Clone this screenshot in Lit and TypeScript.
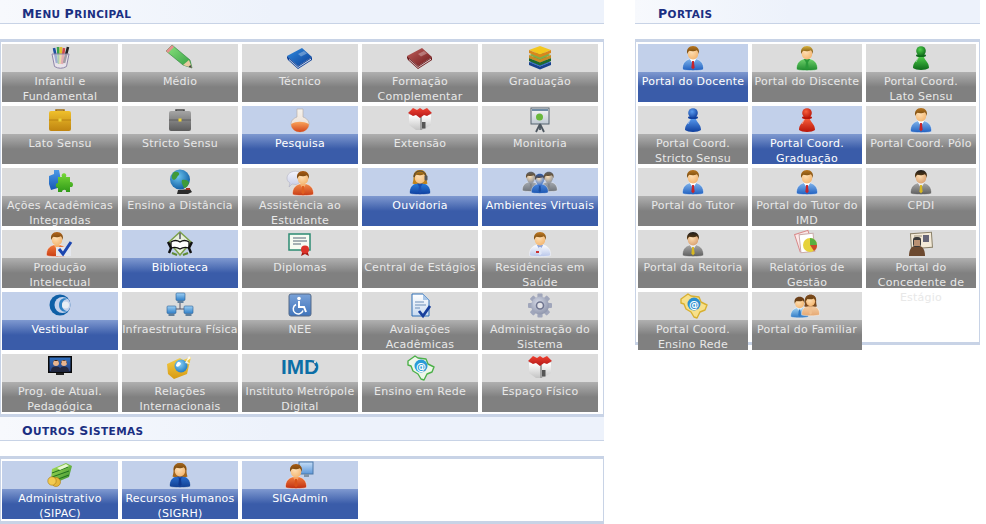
import { LitElement, html, css, svg } from "lit";
import { customElement } from "lit/decorators.js";

const defs = new Map<string, any>();
const L = (a: string, b: string, diag = false) => {
  const id = `l${diag ? "d" : ""}${a.slice(1)}${b.slice(1)}`;
  if (!defs.has(id))
    defs.set(id, svg`<linearGradient id=${id} x1="0" y1="0" x2=${diag ? "1" : "0"} y2="1"><stop offset="0" stop-color=${a}/><stop offset="1" stop-color=${b}/></linearGradient>`);
  return `url(#${id})`;
};
const R = (a: string, b: string) => {
  const id = `r${a.slice(1)}${b.slice(1)}`;
  if (!defs.has(id))
    defs.set(id, svg`<radialGradient id=${id} cx=".4" cy=".35" r=".7"><stop offset="0" stop-color=${a}/><stop offset="1" stop-color=${b}/></radialGradient>`);
  return `url(#${id})`;
};

type P = { skin?: string; hair?: string; a?: string; b?: string; tie?: string; shirt?: string; x?: number; y?: number; s?: number; long?: boolean };
const person = ({ skin = "#f3b56f", hair = "#b8761f", a = "#7fb3ea", b = "#1f5fc0", tie = "#c8242a", shirt = "#fff", x = 0, y = 0, s = 1, long = false }: P) => svg`
  <g transform="translate(${x} ${y}) scale(${s})">
    <path d="M5.500 24.500c-.5-6 3-9.500 7-10.500h7c4 1 7.500 4.500 7 10.500-3 1.500-18 1.500-21 0z" fill=${L(a, b)} stroke="#fff" stroke-opacity=".55" stroke-width=".8"/>
    <path d="M12.800 14l3.200 5 3.200-5z" fill=${shirt}/>
    <path d="M15.100 16h1.800l.7 6.500-1.600 2-1.600-2z" fill=${tie}/>
    ${long ? svg`<path d="M9.500 9c-1-5 2.500-8 6.500-8s7.500 3 6.500 8c0 2 .5 4 1 5.500-2 1-4 .5-5 0h-5c-1 .5-3 1-5 0 .5-1.500 1-3.500 1-5.500z" fill=${hair}/>` : ""}
    <ellipse cx="16" cy="8.500" rx="5.300" ry="6" fill=${R("#ffe0b5", skin)}/>
    <path d="M10.300 9C9 4 12 1 16 1s7 3 5.700 8c-.4-2-1.200-3.200-2-3.700-2 1.200-5.500 1.200-7.200.5-1 .7-1.800 1.700-2.200 3.200z" fill=${L(hair, "#6b430f")}/>
  </g>`;

const pawn = (a: string, b: string) => svg`
  <path d="M8 23c0-6 4-7 5.500-12h5C20 16 24 17 24 23c-3 2.500-13 2.500-16 0z" fill=${L(a, b)}/>
  <ellipse cx="16" cy="10.500" rx="5" ry="1.500" fill=${b}/>
  <circle cx="16" cy="6" r="4.800" fill=${R(a, b)}/>
  <path d="M11 17c1-2 2-4 2.500-5" stroke="#fff" stroke-opacity=".5" stroke-width="1" fill="none"/>`;

const book = (a: string, b: string, page = "#ddd") => svg`
  <path d="M3 11L18 3l10 9-14 9z" fill=${L(a, b, true)}/>
  <path d="M3 11l11 10 14-9v3l-14 9L4 15q-1.500-2-1-4z" fill=${b}/>
  <path d="M5 14l9 8 13-8.500v1.200L14 23l-9-8z" fill=${page}/>
  <path d="M14 9l6-3 3 2.500-6 3z" fill="#fff" fill-opacity=".3"/>`;

const slab = (y: number, a: string, b: string) => svg`
  <path d="M5 ${y + 4}L16 ${y}l11 4-11 4.500z" fill=${a}/>
  <path d="M5 ${y + 4}l11 4.500 11-4.500v3l-11 4.500-11-4.500z" fill=${b}/>`;
const stack = svg`${slab(13, "#2f6fd0", "#17418f")}${slab(9, "#3ea24a", "#1f6b2c")}${slab(6, "#7bb04b", "#c98a25")}${slab(1, "#f3c71e", "#d8871c")}`;

const brief = (a: string, b: string, d: string) => svg`
  <path d="M12 6V3h8v3" fill="none" stroke=${d} stroke-width="1.500"/>
  <rect x="5" y="4" width="22" height="20" rx="2" fill=${L(a, b)}/>
  <path d="M5 13h22" stroke=${d} stroke-opacity=".6"/>
  <rect x="14.500" y="11.500" width="3" height="3" fill="#ecd33a"/>`;

const house = svg`
  <path d="M5 8h22v10l-9 5h-6l-7-5z" fill=${L("#ffffff", "#c4c4c4")}/>
  <path d="M16 10v13h2V10z" fill="#a2a2a2"/>
  <rect x="18" y="15" width="3.500" height="6.500" fill="#555"/>
  <path d="M4 6l5-5 4 2 3-2 3 2 4-2 5 5-5 3-3-1-4 3-4-3-3 1z" fill=${L("#f04030", "#b01818")}/>`;

const board = svg`
  <rect x="7" y="1" width="18" height="16" fill=${L("#f7f7f7", "#bfc9d2")} stroke="#55636e"/>
  <circle cx="15.500" cy="10" r="3.500" fill="#69b83c"/>
  <path d="M8 3h16" stroke="#6f8ca5" stroke-width="2"/>
  <path d="M16 17l-4 8M16 17l4 8M16 17v6" stroke="#4d5760" stroke-width="1.800"/>`;

const puzzle = svg`
  <path d="M5 7l5-2V1h5l1 5 1 12-10 3-2-6z" fill=${L("#4c9ae8", "#1658b5")}/>
  <path d="M14 8h4c-2-5 6-5 4 0h4v5c4-1 4 6 0 5v5h-4c1-3-4-3-4 0h-4v-4c-3 0-3-5 0-5z" fill=${L("#78d838", "#2f9a18")}/>`;

const globe = svg`
  <path d="M14 21l12-1 2 3-4 2H13z" fill="#2c2c2c"/><rect x="22" y="19" width="4" height="2" fill="#a03020"/>
  <circle cx="16" cy="10.500" r="10" fill=${R("#6cc5f0", "#0d5aa0")}/>
  <path d="M10 3c4-1 6 1 5 3-2 1-2 4-5 5-3-1-3-5 0-8zM18 11c4-1 7 1 7 3-1 3-3 5-5 5-1-3-3-5-2-8z" fill="#3f9a3a"/>`;

const bubbleP = svg`
  <path d="M3 9c0-6 8-8 12-6 2 2 2 8-1 12-2 1-5 0-6 0l-3 3 1-4c-2-1-3-3-3-5z" fill=${L("#f4f4fb", "#c5cbe6")} stroke="#aab" stroke-width=".5"/>
  ${person({ hair: "#a85a12", a: "#f08a4a", b: "#c93c14", tie: "#e06020", shirt: "#f6b070", x: 3, y: 1 })}`;

const headset = svg`
  ${person({ hair: "#c0841e", a: "#2a80dd", b: "#103f9e", tie: "#1a4fb0", shirt: "#1a4fb0", skin: "#f4be7a", long: true })}
  <path d="M10 8c0-8 12-8 12 0" fill="none" stroke="#444" stroke-width="1"/>
  <rect x="20.500" y="6.500" width="3" height="5" rx="1" fill="#555"/>`;

const group = svg`
  ${person({ hair: "#5f646c", a: "#a4a9b0", b: "#6f747b", tie: "#80858c", shirt: "#90959c", skin: "#8f949c", x: -6, y: 2, s: .8 })}
  ${person({ hair: "#5f646c", a: "#a4a9b0", b: "#6f747b", tie: "#80858c", shirt: "#90959c", skin: "#8f949c", x: 12, y: 2, s: .8 })}
  ${person({ hair: "#2b5bb0", a: "#4a86dc", b: "#1c56b0", tie: "#1c4ea0", shirt: "#3a70c8", skin: "#4a7ccc", x: 3, y: 4, s: .8 })}`;

const check = svg`
  ${person({ hair: "#b5661c", a: "#f07a3a", b: "#c93c14", tie: "#e06020", shirt: "#f6b070", x: -3 })}
  <path d="M12 25v-9h15v9z" fill="#e4e7ee"/>
  <path d="M15 18l4 5 8-12" fill="none" stroke="#1c46b0" stroke-width="3"/>`;

const library = svg`
  <path d="M16 1l11 10-11 13L5 11z" fill="#e7efdc" stroke="#7ca04a" stroke-width="1.500"/>
  <path d="M7 11c3-2 6-2 9 0 3-2 6-2 9 0v6c-3-1-6-1-9 1-3-2-6-2-9-1z" fill="#fff" stroke="#111" stroke-width="1.300"/>
  <path d="M4 11l3 6-2 5M28 11l-3 6 2 5" stroke="#111" stroke-width="2.400" fill="none"/>
  <path d="M16 2v6" stroke="#556" stroke-width="1.500"/><path d="M8 22l5 2M24 22l-5 2" stroke="#5f8a35" stroke-width="2"/>`;

const diploma = svg`
  <rect x="5" y="3" width="21" height="16" fill="#f7fbf2" stroke="#2c8b72" stroke-width="1.500"/>
  <path d="M9 7h13M9 10h14M9 13h8" stroke="#567" stroke-width="1"/>
  <path d="M17 25l2-6h4l2 6-4-2z" fill="#a01a14"/><circle cx="21" cy="18.500" r="4" fill="#dc3228"/>`;

const doctor = svg`
  ${person({ hair: "#c07a22", a: "#fbfcff", b: "#b8c6ea", tie: "#dfe6f6", shirt: "#8ea6dd" })}
  <rect x="12" y="20" width="3" height="2" fill="#c33"/>`;

const swirlBlue = svg`
  <circle cx="16" cy="12" r="10.500" fill="#0e5fa6"/>
  <circle cx="18.500" cy="12" r="8" fill="#c2d0ea"/>
  <path d="M24 6c-5-2-9 1-9 6s4 8 9 6c-3 0-6-2-6-6s3-6 6-6z" fill="#2f82c4"/>
  <circle cx="21.500" cy="12" r="3.500" fill="#e8eef4"/>`;

const pc = (x: number, y: number) => svg`
  <rect x=${x} y=${y} width="9" height="7.500" rx="1" fill=${L("#9fd0f4", "#2f7fc8")} stroke="#2a5f96" stroke-width=".6"/>
  <rect x=${x + 1.5} y=${y + 8} width="6" height="2" fill="#5f7f9c"/>`;
const network = svg`
  <path d="M16 8v8H8v2M16 16h9v2" fill="none" stroke="#556" stroke-width="1"/>
  ${pc(12, 0)}${pc(3, 13)}${pc(20, 13)}`;

const wheel = svg`
  <rect x="5" y="1" width="22" height="22" rx="2" fill=${L("#7aa2d8", "#3f74bb")} stroke="#566b88"/>
  <circle cx="15" cy="5.500" r="1.800" fill="#fff"/>
  <path d="M15 8v6h5l2 5" fill="none" stroke="#fff" stroke-width="2"/>
  <path d="M12 11.500a5 5 0 1 0 7 6" fill="none" stroke="#fff" stroke-width="1.500"/>`;

const doc = svg`
  <path d="M8 1h11l6 6v16H8z" fill=${L("#fff", "#c8daf0")} stroke="#2f6fb5"/>
  <path d="M19 1v6h6z" fill="#a8c6e8"/>
  <path d="M11 9h9M11 12h11M11 15h5" stroke="#6d8fb8"/>
  <path d="M15 18l4 5 7-10" fill="none" stroke="#173f9c" stroke-width="2.800"/>`;

const gear = svg`
  <g transform="translate(16 12.500)">
    ${[0, 45, 90, 135].map((r) => svg`<rect x="-2.600" y="-12" width="5.200" height="24" rx="1" transform="rotate(${r})" fill="#a0a6bb"/>`)}
    <circle r="9" fill=${R("#d5d9e6", "#8c93aa")}/><circle r="3.500" fill="#e4e4e8" stroke="#6f7590" stroke-width="1.600"/>
  </g>`;

const tv = svg`
  <rect x="4" y="1" width="24" height="17" fill="#0a0a0a"/>
  <rect x="5.500" y="2.500" width="21" height="14" fill=${L("#2f6fc0", "#2a3f7a")}/>
  <circle cx="12" cy="8" r="3" fill="#e8b58e"/><circle cx="20" cy="8" r="3" fill="#e8b58e"/>
  <path d="M7 16.500c0-4 2-5 5-5s5 1 4 5zM15.500 16.500c0-4 2-5 4.500-5s5 1 5 5z" fill="#23283f"/>
  <path d="M9 8c0-4 6-4 6 0l-1-2h-4zM17 9c-1-5 7-5 6 0l-1-3h-4z" fill="#2b1a10"/>
  <path d="M12 18h8v2H12z" fill="#222"/>`;

const folderGlobe = svg`
  <path d="M3 9l13-6 3 2 8-3-4 17-13 5-6-5z" fill=${L("#f6d04a", "#d79a12")}/>
  <circle cx="17" cy="11" r="6.500" fill=${R("#8ed4f6", "#1c78c0")}/>
  <path d="M14 7c3 0 4 2 2 3-1 2-3 2-4 1 0-2 1-3 2-4z" fill="#fff"/>
  <path d="M25 1l2 2-4 3 3 3-5-1z" fill="#fff" fill-opacity=".85"/>`;

const imd = svg`
  <text x="16" y="19" text-anchor="middle" font-family="Liberation Sans, sans-serif" font-weight="700" font-size="21" textLength="38" lengthAdjust="spacingAndGlyphs" fill="#0c6ea6">IMD</text>
  <circle cx="31" cy="7" r="1.200" fill="#ddd"/><circle cx="28" cy="10" r="1.200" fill="#ddd"/><circle cx="31" cy="12" r="1" fill="#ddd"/>`;

const brazil = (fill: string, line: string, at: string) => svg`
  <path d="M4 6l7-5 3 2 8 1 2 5 6 3-2 5-5 2-3 6-3-1-3-5-5-3-2-5-3-1z" fill=${fill} stroke=${line} stroke-width="1.400" stroke-linejoin="round"/>
  <circle cx="17" cy="11" r="6.500" fill=${at}/>
  <text x="17" y="14.500" text-anchor="middle" font-family="DejaVu Sans, sans-serif" font-weight="700" font-size="10" fill="#fff">@</text>`;

const money = svg`
  <path d="M8 7l14-6 6 3-3 11-14 6-4-4z" fill=${L("#b0e65a", "#2e8a2c", true)}/>
  <path d="M8 11l16-6M8 15l17-6M9 19l16-6" stroke="#1f6f1f" stroke-width="1"/>
  <path d="M13 6l9-4 3 2-9 4z" fill="#e6f6d0"/>
  <circle cx="12" cy="20" r="4.500" fill="#e6b73a" stroke="#a87a14" stroke-width=".6"/>
  <circle cx="8" cy="19" r="4.200" fill="#f3cb50" stroke="#a87a14" stroke-width=".6"/>`;

const woman = person({ hair: "#a4661c", a: "#2a6fd0", b: "#123f90", tie: "#103a90", shirt: "#1a4fb0", long: true });

const sigadmin = svg`
  <rect x="15" y="0" width="14" height="12" fill=${L("#c6def7", "#5d97d8")} stroke="#4d79a8"/>
  <path d="M20 12h5v3h-5z" fill="#7f93a8"/>
  ${person({ hair: "#a85a12", a: "#f07a3a", b: "#c02f10", tie: "#d85018", shirt: "#f6a060", x: -4, y: 1 })}`;

const report = svg`
  <rect x="6" y="1" width="14" height="18" transform="rotate(-18 13 10)" fill="#fbe8e8" stroke="#d88a8a"/>
  <rect x="9" y="3" width="14" height="18" transform="rotate(-6 16 12)" fill="#fff" stroke="#c9a9a9"/>
  <circle cx="19" cy="14" r="7" fill="#e6d23c"/>
  <path d="M19 14V7a7 7 0 0 1 7 7z" fill="#58b040"/><path d="M19 14h7a7 7 0 0 1-3 6z" fill="#c94a2a"/>`;

const concedente = svg`
  <rect x="6" y="2" width="21" height="15" fill="#f3ead8" stroke="#8a8068" transform="rotate(-4 16 10)"/>
  <rect x="18" y="4" width="6" height="7" fill="#667" />
  <path d="M9 5h8M9 8h7" stroke="#9a8f78"/>
  <path d="M4 25c0-6 2-9 5-10h6c3 1 5 4 5 10z" fill="#6d4a30"/>
  <rect x="8" y="6" width="8" height="10" rx="3" fill="#3a3a3a"/>
  <rect x="9" y="9" width="6" height="6" fill="#b99072"/>`;

const family = svg`
  ${person({ hair: "#6b3d1a", a: "#9dd0f2", b: "#2f79c4", tie: "#2f79c4", shirt: "#dbeefa", x: -5, y: 3, s: .85 })}
  ${person({ hair: "#7c4a1e", a: "#f5cfa5", b: "#e5a873", tie: "#f0c090", shirt: "#f0c090", x: 6, y: 1, s: .85, long: true })}`;

const teacher = person({});
const green = person({ hair: "#d9b23a", a: "#6ed06a", b: "#1e8a2e", tie: "#2a9a3a", shirt: "#2a9a3a" });
const dark = person({ hair: "#1d1d1d", a: "#a8a8a8", b: "#5e5e5e", tie: "#d8b820", shirt: "#eee", skin: "#d9a070" });

const cup = svg`
  <g fill="none" stroke-width="2.600">
    <path d="M10 3l3 15" stroke="#1d4fa0"/><path d="M14 2l1 17" stroke="#3aa14a"/><path d="M17 2l-.5 17" stroke="#e0c030"/>
    <path d="M20 3l-2 16" stroke="#cf4a4a"/><path d="M24 2l-4 16" stroke="#222"/>
  </g>
  <path d="M8 9h17l-2.500 12.500Q16.500 25 10.500 21.500z" fill="#f0e8f4" fill-opacity=".62" stroke="#8f86a8"/>`;

const pencil = svg`
  <path d="M8 0l18 15 2 8-9-3L2 6z" fill=${L("#8fe680", "#2f9a40", true)} stroke="#2a7f38" stroke-width=".6"/>
  <path d="M8 0L2 6l2 2 6-6z" fill="#e88f8f"/>
  <path d="M25 15l3 8-9-3z" fill="#e9c9a0"/><path d="M26.500 20l1.500 3-3.500-1.300z" fill="#444"/>`;

const flask = svg`
  <path d="M13 2h6v8c4 1.500 6 4 6 7a9 8 0 0 1-18 0c0-3 2-5.500 6-7z" fill=${L("#f6f3ee", "#e8d8cc")} stroke="#b5a9a0" stroke-width=".6"/>
  <path d="M7.200 17c5-3 12-3 17.600 0 .2 4.500-4 8-8.800 8s-9-3.500-8.800-8z" fill=${L("#f9a45a", "#d4461a")}/>`;

const none = svg``;

type Item = [string, any, boolean?];
const menu: Item[] = [
  ["Infantil e Fundamental", cup], ["Médio", pencil], ["Técnico", book("#2f8be0", "#0d3f96", "#cfd8e8")],
  ["Formação Complementar", book("#c0605c", "#6e1a1c", "#d8c8c8")], ["Graduação", stack],
  ["Lato Sensu", brief("#efc02c", "#bf8410", "#a06c0c")], ["Stricto Sensu", brief("#a5a5a5", "#5c5c5c", "#444")],
  ["Pesquisa", flask, true], ["Extensão", house], ["Monitoria", board],
  ["Ações Acadêmicas Integradas", puzzle], ["Ensino a Distância", globe], ["Assistência ao Estudante", bubbleP],
  ["Ouvidoria", headset, true], ["Ambientes Virtuais", group, true],
  ["Produção Intelectual", check], ["Biblioteca", library, true], ["Diplomas", diploma], ["Central de Estágios", none],
  ["Residências em Saúde", doctor],
  ["Vestibular", swirlBlue, true], ["Infraestrutura Física", network], ["NEE", wheel], ["Avaliações Acadêmicas", doc],
  ["Administração do Sistema", gear],
  ["Prog. de Atual. Pedagógica", tv], ["Relações Internacionais", folderGlobe], ["Instituto Metrópole Digital", imd],
  ["Ensino em Rede", brazil("#eef6ea", "#4db04a", "#2a9bd8")], ["Espaço Físico", house],
];
const outros: Item[] = [
  ["Administrativo (SIPAC)", money, true], ["Recursos Humanos (SIGRH)", woman, true], ["SIGAdmin", sigadmin, true],
];
const portais: Item[] = [
  ["Portal do Docente", teacher, true], ["Portal do Discente", green], ["Portal Coord.\nLato Sensu", pawn("#4fd04a", "#0e6a1a")],
  ["Portal Coord. Stricto Sensu", pawn("#5a9cf0", "#0f3f9e")], ["Portal Coord. Graduação", pawn("#f8603c", "#b81408"), true], ["Portal Coord. Pólo", teacher],
  ["Portal do Tutor", teacher], ["Portal do Tutor do IMD", teacher], ["CPDI", dark],
  ["Portal da Reitoria", dark], ["Relatórios de Gestão", report], ["Portal do Concedente de Estágio", concedente],
  ["Portal Coord. Ensino Rede", brazil("#f7e08a", "#d8b030", "#2a8fd0")], ["Portal do Familiar", family],
];

const heading = (t: string) =>
  html`<h2>${t.split(" ").map((w, i) => html`${i ? " " : ""}<span class="cap">${w[0]}</span>${w.slice(1)}`)}</h2>`;

@customElement("app-root")
export class AppRoot extends LitElement {
  static styles = css`
    :host { display: block; width: 986px; height: 524px; overflow: hidden; background: #fff; font-family: "DejaVu Sans", Verdana, sans-serif; }
    .defs { display: block; width: 0; height: 0; }
    .page { display: flex; gap: 31px; align-items: flex-start; }
    .left { width: 604px; }
    .right { width: 345px; }
    h2 {
      margin: 0; height: 23px; padding-left: 22px;
      background: linear-gradient(90deg, #f7f9fd, #edf2fb 45%);
      border-bottom: 1px solid #c8d3e6;
      font: 700 10.500px/28px "DejaVu Sans", sans-serif; letter-spacing: .4px; text-transform: uppercase; color: #1b2f82;
    }
    .cap { font-size: 12.500px; }
    .right h2 { padding-left: 23px; }
    .panel {
      margin-top: 15px; box-sizing: border-box;
      border: 1px solid #c8d3e6; border-top-width: 3px; border-bottom-width: 3px;
      padding: 2px 0 2px 1px;
    }
    .right .panel { height: 306px; padding-left: 2px; }
    .grid { display: grid; grid-template-columns: repeat(5, 116px); grid-auto-rows: 58px; gap: 4px; }
    .right .grid { grid-template-columns: repeat(3, 110px); }
    .card { display: flex; flex-direction: column; min-width: 0; background: #dcdcdc; }
    .card.on { background: #c2d0ea; }
    .top { height: 28px; display: flex; justify-content: center; padding-top: 1px; box-sizing: border-box; }
    .top svg { width: 32px; height: 26px; overflow: visible; flex: none; }
    .label {
      height: 30px; box-sizing: border-box; padding-top: 2px;
      background: linear-gradient(#b0b0b0, #808080 50%);
      color: #e8e8e8; font-size: 11px; line-height: 15px; letter-spacing: .24px; text-align: center; white-space: pre-line;
    }
    .on .label { background: linear-gradient(#7f99d0, #3a5ca9 50%); color: #fff; }
  `;

  private card([label, icon, on]: Item) {
    return html`<div class="card ${on ? "on" : ""}">
      <div class="top"><svg viewBox="0 0 32 26">${icon}</svg></div>
      <div class="label">${label}</div>
    </div>`;
  }

  render() {
    return html`
      <svg class="defs"><defs>${[...defs.values()]}</defs></svg>
      <div class="page">
        <div class="left">
          ${heading("Menu Principal")}
          <div class="panel"><div class="grid">${menu.map((i) => this.card(i))}</div></div>
          ${heading("Outros Sistemas")}
          <div class="panel"><div class="grid">${outros.map((i) => this.card(i))}</div></div>
        </div>
        <div class="right">
          ${heading("Portais")}
          <div class="panel"><div class="grid">${portais.map((i) => this.card(i))}</div></div>
        </div>
      </div>`;
  }
}
